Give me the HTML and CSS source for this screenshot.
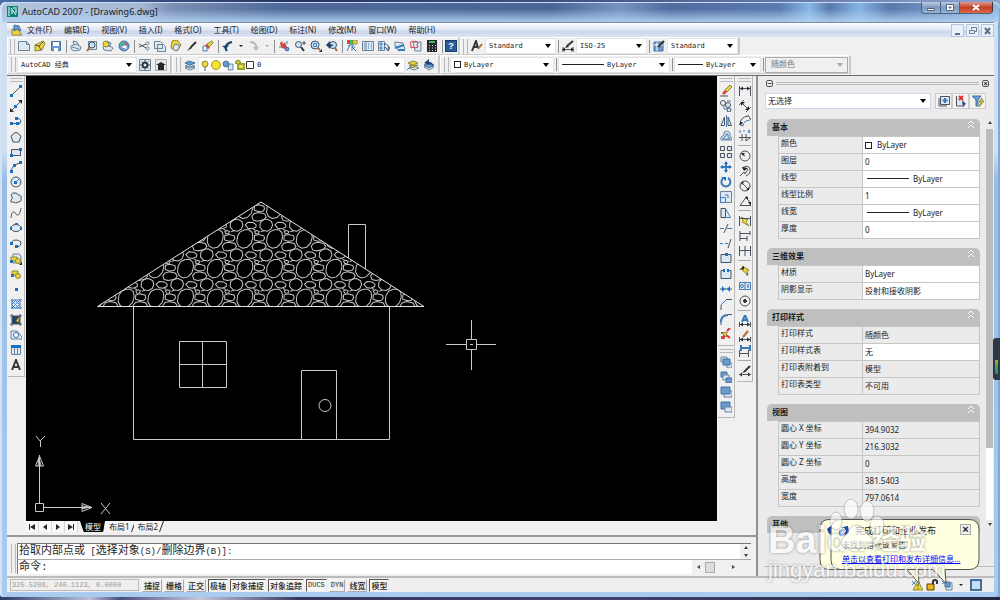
FILE: index.html
```html
<!DOCTYPE html>
<html lang="zh-CN">
<head>
<meta charset="utf-8">
<title>AutoCAD 2007 - [Drawing6.dwg]</title>
<link rel="stylesheet" href="styles.css">
</head>
<body>
<div class="window">
  <header class="titlebar">
    <svg class="app-logo"><path class="teal" d="M0 0h11v11H0z"/><path class="w" d="M2 1v9M4 2l5 7M9 1v6M5 8V4M7 1v2"/></svg>
    <h1>AutoCAD 2007 - [Drawing6.dwg]</h1>
    <div class="win-controls">
      <button aria-label="最小化"><svg><path class="pw" d="M2.500 6.500h7v2h-7z"/></svg></button>
      <button aria-label="最大化"><svg><path class="pw" d="M2.500 2.500h7v6h-7zM5 5h2v1H5z"/></svg></button>
      <button class="close" aria-label="关闭"><svg><path class="x2" d="M3 3l6 5M9 3l-6 5"/></svg></button>
    </div>
  </header>

  <nav class="menubar">
    <svg class="doc-logo"><path class="fy" d="M1 5l6 1 4 5H1z"/><path class="fb" d="M3 1l5 1 2 5-4-2-3 2z"/></svg>
    <button>文件(F)</button><button>编辑(E)</button><button>视图(V)</button><button>插入(I)</button><button>格式(O)</button><button>工具(T)</button><button>绘图(D)</button><button>标注(N)</button><button>修改(M)</button><button>窗口(W)</button><button>帮助(H)</button>
    <div class="mdi">
      <button aria-label="最小化图形"><svg><path class="g2" d="M3 9h5"/></svg></button>
      <button aria-label="还原图形"><svg><path class="g" d="M4.500 4.500v-2h5v4h-2M2.500 5.500h5v3h-5z"/></svg></button>
      <button aria-label="关闭图形"><svg><path class="g2" d="M3 3l5 6M8 3L3 9"/></svg></button>
    </div>
  </nav>

  <div class="toolrow">
    <div class="bar">
      <i class="grip"></i>
      <button class="tb" aria-label="新建"><svg><path class="lb" d="M.5 1.500h8l3 3v6H.5z"/><path d="M8.500 1.500v3h3"/></svg></button>
      <button class="tb" aria-label="打开"><svg><path class="fy" d="M1 5l8-4 2 2-3 7-7 1z"/><path class="k" d="M1 5l4 1 5-5M5 6l2 4"/></svg></button>
      <button class="tb" aria-label="保存"><svg><path class="fb" d="M1.500 1.500h9v9h-9z"/><path class="fw" d="M3 2h6v4H3zM4 8h4v3H4z"/></svg></button>
      <i class="sep"></i>
      <button class="tb" aria-label="打印"><svg><path class="lb" d="M1 6l5-2 5 3-1 3-6 1-3-2zM4 5L3 1l4 1 2 3M2 7l7 2"/></svg></button>
      <button class="tb" aria-label="打印预览"><svg><path class="lb" d="M2.500 1.500h8v8h-8z"/><circle class="gl" cx="6" cy="5" r="3"/><path class="o2" d="M4 7l-3 4"/></svg></button>
      <button class="tb" aria-label="发布"><svg><path class="lb" d="M1 7l5-2 5 3-2 3-7-1z"/><circle class="fy" cx="4" cy="4" r="3"/><path class="b" d="M5 2l4 1-2 4"/></svg></button>
      <button class="tb" aria-label="三维 DWF"><svg><circle class="fb" cx="6" cy="6" r="5"/><path class="fg" d="M2 4l4-3v5z"/><path class="fr" d="M7 2l3 3-3 1z"/><path class="fw" d="M3 7l5-2 1 4z"/></svg></button>
      <i class="sep"></i>
      <button class="tb" aria-label="剪切"><svg><path class="k" d="M1 4l7 4M1 7l7-3"/><circle cx="9.500" cy="3.500" r="1.500"/><circle cx="9.500" cy="8.500" r="1.500"/></svg></button>
      <button class="tb" aria-label="复制"><svg><path class="lb" d="M.5 1.500h6l2 2v5h-8zM3.500 4.500h6l2 2v5h-8z"/></svg></button>
      <button class="tb" aria-label="粘贴"><svg><path class="fy" d="M2 1l5-1 4 5-4 6-6-3z"/><path class="lb" d="M5 4l4 1v4l-4 2-2-3z"/></svg></button>
      <button class="tb" aria-label="画笔"><svg><path class="k2" d="M10 2L5 7"/><path class="fk" d="M5 6l1 2-5 3z"/></svg></button>
      <button class="tb" aria-label="特性匹配"><svg><path class="b" d="M1 6h4v5H1z"/><path class="fr" d="M3 5l2-1 3 4-2 1z"/><path class="fy" d="M5 4l5-3 1 2-4 4z"/></svg></button>
      <i class="sep"></i>
      <button class="tb" aria-label="放弃"><svg><path class="nv2" d="M5 11C2 8 4 3 10 2"/><path class="nf" d="M0 6l7-1-3 4z"/></svg></button>
      <button class="dd" aria-label="放弃列表"></button>
      <button class="tb" aria-label="重做"><svg><path class="gr2" d="M2 2c5 0 7 3 6 7"/><path class="gf" d="M5 7h6l-3 4z"/></svg></button>
      <button class="dd off" aria-label="重做列表"></button>
      <i class="sep"></i>
      <button class="tb" aria-label="实时平移"><svg><path class="fr" d="M2 3l2-2 1 3 2-2 1 3 1 2-3 2-3-2z"/><path class="fb" d="M8 7l3 1-1 3-3-1z"/><path class="b" d="M1 7h3M9 1v3"/></svg></button>
      <button class="tb" aria-label="实时缩放"><svg><circle class="gl" cx="4.500" cy="4.500" r="3"/><path class="k2" d="M7 7l3 4"/><path class="k" d="M8 3h4M10 1v4"/></svg></button>
      <button class="tb" aria-label="窗口缩放"><svg><circle class="gl" cx="5" cy="5" r="4"/><path class="b" d="M3.500 3.500h3v3h-3z"/><path class="o2" d="M8 8l2 2"/><path class="fk" d="M12 9v3H9z"/></svg></button>
      <button class="tb" aria-label="缩放上一个"><svg><circle class="gl" cx="7" cy="5" r="3.500"/><path class="nf" d="M0 5l4-4v3l4 1-4 2v2z"/><path class="o2" d="M9 8l2 3"/></svg></button>
      <i class="sep"></i>
      <button class="tb" aria-label="特性"><svg><path class="fr" d="M1 0h4v4H1z"/><path class="fg" d="M4 0h3v4H4z"/><path class="fy" d="M7 0h4v4H7z"/><path class="b" d="M2 6l4-2 3 4M4 5L1 11M6 5v6"/><path class="k" d="M6 7l4 4"/></svg></button>
      <button class="tb" aria-label="设计中心"><svg><path class="lb" d="M.5 1.500h11v9H.5zM4 1v10"/><path class="b" d="M6 4h1M9 4h1M6 6h1M9 6h1M6 8h1M9 8h1M2 4h1M2 6h1M2 8h1"/></svg></button>
      <button class="tb" aria-label="工具选项板"><svg><path class="lb" d="M.5 1.500h6v9h-6z"/><path class="b" d="M2 3h2v2H2zM2 7h2v2H2z"/><path class="nv" d="M6 4c4 0 5 2 4 5M7 7l3 4 2-4"/></svg></button>
      <button class="tb" aria-label="图纸集管理器"><svg><path class="lb" d="M1 2l8 1 2 6-6 2-4-5z"/><path class="b2" d="M1 8l9-3M4 10h7"/></svg></button>
      <button class="tb" aria-label="标记集管理器"><svg><path class="lb" d="M3 2h8v9H5z"/><path class="r" d="M2 1l2 1 2-1 2 2-1 2 1 2-3 1-2-1-2 1V5L0 3z"/></svg></button>
      <button class="tb" aria-label="计算器"><svg><path class="fk" d="M1 0h10v12H1z"/><path class="fg" d="M3 1h6v2H3z"/><path class="dots" d="M3 5.500h7M3 8h7M3 10.500h7"/></svg></button>
      <i class="sep"></i>
      <button class="tb help" aria-label="帮助">?</button>
    </div>
    <div class="bar">
      <i class="grip"></i>
      <button class="tb" aria-label="文字样式"><svg><path class="k2" d="M1 11L5 1l2 7M3 7h4"/><path class="o2" d="M11 4l-4 5"/></svg></button>
      <label class="combo w70"><select aria-label="文字样式"><option>Standard</option></select></label>
      <i class="sep"></i>
      <button class="tb" aria-label="标注样式"><svg><path class="k" d="M0 9.500h12M1 7v5M11 7v5"/><path class="k2" d="M11 1L5 6"/><path class="fk" d="M3 8l2-3 2 2zM0 9.500l3-2v4zM12 9.500l-3-2v4z"/></svg></button>
      <label class="combo w70"><select aria-label="标注样式"><option>ISO-25</option></select></label>
      <i class="sep"></i>
      <button class="tb" aria-label="表格样式"><svg><path class="fb" d="M1 2h9v9H1z"/><path class="w" d="M1 5h9M4 2v9"/><path class="k2" d="M11 1L5 7"/></svg></button>
      <label class="combo w70"><select aria-label="表格样式"><option>Standard</option></select></label>
    </div>
  </div>

  <div class="toolrow second">
    <div class="bar">
      <i class="grip"></i>
      <label class="combo w120"><select aria-label="工作空间"><option>AutoCAD 经典</option></select></label>
      <button class="tb" aria-label="工作空间设置"><svg><path class="lb" d="M.5.5h11v11H.5z"/><circle class="k2" cx="6" cy="6" r="2.500"/><path class="k" d="M6 1v2M6 9v2M1 6h2M9 6h2M2.500 2.500l1 1M8.500 8.500l1 1M9.500 2.500l-1 1M2.500 9.500l1-1"/></svg></button>
      <button class="tb" aria-label="我的工作空间"><svg><path class="dots2" d="M.5.5h11v11H.5z"/><path class="fk" d="M1 6l5-3 5 3H9v5H3V6z"/></svg></button>
    </div>
    <div class="bar">
      <i class="grip"></i>
      <button class="tb" aria-label="图层特性管理器"><svg><path class="lb" d="M1 9l5-2 5 2-5 2zM1 7l5-2 5 2-5 2z"/><path class="fb" d="M1 4l4-2 6 2-5 2z"/></svg></button>
      <label class="combo layer">
        <svg class="layer-pics"><circle class="fy" cx="5" cy="5" r="3"/><path class="k" d="M4 9h2M4 11h2"/><circle class="sun" cx="16" cy="6" r="4.500"/><path class="lb" d="M29 5h4v6h-5z"/><circle class="fb" cx="26" cy="5" r="3"/><path class="lock" d="M36 5V3q2-3 4 0v3M38 5h6v5h-6z"/><path class="k fw" d="M46.500 2.500h7v7h-7z"/></svg>
        <select aria-label="图层"><option>0</option></select></label>
      <button class="tb" aria-label="将对象的图层置为当前"><svg><path class="lb" d="M2 9l5-2 5 2-5 2z"/><path class="fy" d="M1 4l5-2 5 2-5 2zM2 6l5 1 4-1-5 3z"/><path class="b" d="M0 11l4-4"/></svg></button>
      <button class="tb" aria-label="上一个图层"><svg><path class="lb" d="M1 8l5-2 5 2-5 3z"/><path class="fb" d="M1 6l5-2 5 2-5 3z"/><path class="nf" d="M1 4l5-4v3q4 0 4 4Q8 4 6 6z"/></svg></button>
    </div>
    <div class="bar">
      <i class="grip"></i>
      <label class="combo w104"><i class="swatch"></i><select aria-label="颜色"><option>ByLayer</option></select></label>
      <i class="sep"></i>
      <label class="combo w111"><i class="line wide"></i><select aria-label="线型"><option>ByLayer</option></select></label>
      <i class="sep"></i>
      <label class="combo w86"><i class="line"></i><select aria-label="线宽"><option>ByLayer</option></select></label>
      <i class="sep"></i>
      <label class="combo w83 disabled"><select aria-label="打印样式" disabled><option>随颜色</option></select></label>
    </div>
  </div>

  <main class="main">
    <section class="left">
      <div class="workspace">
        <div class="vcol">
          <div class="vbar draw">
            <i class="hgrip"></i>
            <button class="tb" aria-label="直线"><svg><path class="k" d="M1 11L11 1"/><path class="d" d="M0 9h3v3H0zM9 0h3v3H9z"/></svg></button>
            <button class="tb" aria-label="构造线"><svg><path class="k" d="M1 11L11 1"/><path class="fk" d="M0 12V8l4 4zM12 0v4L8 0z"/><path class="d" d="M4 5h3v3H4z"/></svg></button>
            <button class="tb" aria-label="多段线"><svg><path class="k" d="M1 8.500h9q2-3-1-5H6"/><path class="d" d="M0 7h3v3H0zM6 7h3v3H6zM5 2h3v3H5z"/></svg></button>
            <button class="tb" aria-label="正多边形"><svg><path class="lb k" d="M6 1l5 4-2 6H3L1 5z"/></svg></button>
            <button class="tb" aria-label="矩形"><svg><path class="lb k" d="M1.500 3.500h9v6h-9z"/><path class="d" d="M0 8h3v3H0zM9 2h3v3H9z"/></svg></button>
            <button class="tb" aria-label="圆弧"><svg><path class="k" d="M1 11Q2 3 11 2"/><path class="d" d="M0 9h3v3H0zM3 3h3v3H3zM9 0h3v3H9z"/></svg></button>
            <button class="tb" aria-label="圆"><svg><circle class="lb k" cx="6" cy="6" r="5"/><path class="b" d="M6 6l3-3"/><path class="d" d="M4 5h3v3H4z"/></svg></button>
            <button class="tb" aria-label="修订云线"><svg><path class="lb k" d="M2 5Q0 1 4 1q3-1 4 2 4 0 3 3 1 4-3 4-3 2-4 0-4 1-3-2 2-1 1-3z"/></svg></button>
            <button class="tb" aria-label="样条曲线"><svg><path class="k" d="M1 11C2 3 4 4 6 7s4 0 5-6"/></svg></button>
            <button class="tb" aria-label="椭圆"><svg><ellipse class="lb k" cx="6" cy="6" rx="5" ry="3.500"/><path class="d" d="M0 5h2v3H0zM10 5h2v3h-2zM5 1h3v2H5z"/></svg></button>
            <button class="tb" aria-label="椭圆弧"><svg><path class="k" d="M1 6q2-4 6-3 5 1 4 4-1 3-5 3"/><path class="d" d="M0 5h3v3H0zM5 8h3v3H5z"/></svg></button>
            <button class="tb" aria-label="插入块"><svg><path class="lb" d="M3 1h6l2 2v7H3z"/><path class="fy" d="M1 4h6v4H1z"/><circle class="fy" cx="8" cy="8" r="2.500"/><path class="fk" d="M12 9v3H9z"/><path class="d" d="M0 7h3v3H0z"/></svg></button>
            <button class="tb" aria-label="创建块"><svg><path class="fy k" d="M2 3h6v4H2z"/><circle class="fy" cx="8" cy="8" r="2.500"/><path class="d" d="M1 6h3v3H1z"/></svg></button>
            <button class="tb" aria-label="点"><svg><path class="d" d="M5 5h3v3H5z"/></svg></button>
            <button class="tb" aria-label="图案填充"><svg><path class="b" d="M2 1v10M10 1v10M1 2h11M1 10h11M2 6l4-4M2 10l8-8M6 10l4-4M2 3l7 7M6 3l4 4M2 7l3 3"/></svg></button>
            <button class="tb" aria-label="渐变色"><svg><path class="nf" d="M2 2h8v8H2z"/><path class="fy" d="M6 7l3-4v5z"/><path class="k" d="M2 0v12M10 0v12M0 2h12M0 10h12"/></svg></button>
            <button class="tb" aria-label="面域"><svg><path class="lb" d="M1 2h6l5 6v2H1z"/><circle class="b fw" cx="6" cy="6" r="2.500"/></svg></button>
            <button class="tb" aria-label="表格"><svg><path class="lb" d="M1.500 1.500h9v9h-9z"/><path class="d" d="M1 1h10v3H1z"/><path d="M4.500 4v7M7.500 4v7"/></svg></button>
            <button class="tb" aria-label="多行文字"><svg><path class="k2" d="M2 11L6 1l4 10M3.500 8h5"/></svg></button>
          </div>
        </div>

        <div class="drawing">
          <svg class="canvas" viewBox="26 76 691 445" preserveAspectRatio="xMinYMin meet" role="img" aria-label="房屋图形">
            <defs>
              <clipPath id="roofclip"><path d="M97.500 306.500L261 202l163 104.500z"/></clipPath>
              <g id="stones">
                <path d="M14 4l12-1 12 7 3 11-5 12-11 6-13-2-9-10 1-14z"/>
                <path d="M48 20l9-8 15 1 9 7-1 7-12 5-12-2z"/>
                <path d="M33 41l13-6h14l9 8 2 14-5 18-12 12-14 3-11-6-6-12 2-18z"/>
                <path d="M76 40l7-3 7 3-3 6-8 1z"/>
                <path d="M76 52l13-3 15 4 2 8-5 7-13 1-13-4z"/>
                <path d="M68 84l7-9 13-3 18 4 5 9-7 9-20 4-12-3z"/>
                <path d="M94 41l11-4M72 33l7 3"/>
              </g>
              <g id="course"><use href="#stones"/><use href="#stones" x="89"/><use href="#stones" x="178"/><use href="#stones" x="267"/><use href="#stones" x="356"/><use href="#stones" x="445"/><use href="#stones" x="534"/><use href="#stones" x="623"/><use href="#stones" x="712"/><use href="#stones" x="801"/><use href="#stones" x="890"/><use href="#stones" x="979"/></g>
            </defs>
            <g clip-path="url(#roofclip)"><g class="stone" transform="translate(80.800 188.500) scale(.3335)"><use href="#course"/><use href="#course" y="89"/><use href="#course" y="178"/><use href="#course" y="267"/></g></g>
            <path class="roof" d="M97.500 306.500L261 202l163 104.500z"/>
            <path class="ln" d="M348.500 258v-33.500h17V269M133.500 306.500v133h256v-133M179.500 341.500h47v46h-47zM202.500 341.500v46M179.500 364.500h47M301.500 439.500v-69h35v69"/>
            <circle class="ln" cx="325" cy="405.500" r="6"/>
            <path class="ln" d="M446 344.500h20M476 344.500h20M471.500 320v20M471.500 350v20M466.500 339.500h10v10h-10zM470 344.500h3"/>
            <path class="ln" d="M35.500 503.500h8v8h-8zM39.500 503v-48M44 507.500h48M39.500 456l-4 10h8zM38 466l1-8 2 8M92 507.500l-10-4v8zM82 506l8 1-8 2M36 436l4 5 5-5M40.500 441v6M101 503l9 11M110 503l-9 11"/>
          </svg>
          <div class="tabs">
            <button class="nav" aria-label="第一个布局"><svg><path class="fk" d="M3 3h1v6H3zM9 3v6L4 6z"/></svg></button>
            <button class="nav" aria-label="上一个布局"><svg><path class="fk" d="M8 3v6L4 6z"/></svg></button>
            <button class="nav" aria-label="下一个布局"><svg><path class="fk" d="M4 3v6l4-3z"/></svg></button>
            <button class="nav" aria-label="最后一个布局"><svg><path class="fk" d="M3 3v6l5-3zM8 3h1v6H8z"/></svg></button>
            <button class="tab on">模型</button><button class="tab">布局1</button><button class="tab">布局2</button>
          </div>
        </div>

        <div class="vcol">
          <div class="vbar modify">
            <i class="hgrip"></i>
            <button class="tb" aria-label="删除"><svg><path class="fy" d="M5 5l5-5 2 2-5 5z"/><path class="fr" d="M2 8l3-3 2 2-3 3z"/><path class="k" d="M0 11h8"/></svg></button>
            <button class="tb" aria-label="复制对象"><svg><circle class="k" cx="3" cy="3" r="2.500"/><circle class="k lb" cx="8" cy="5" r="2.500"/><circle class="k lb" cx="9" cy="10" r="2"/><path class="b" d="M4 6v3h3M7 1h4"/></svg></button>
            <button class="tb" aria-label="镜像"><svg><path class="k" d="M4.500 2v8.500H1z"/><path class="lb k" d="M8 2v8.500h3.500z"/><path class="b" d="M6.500 0v12"/></svg></button>
            <button class="tb" aria-label="偏移"><svg><path class="lb" d="M1 10V7l3-2V2l4-1 2 2v3l2 2v2z"/><path class="b" d="M3 9V8l3-2V4h2v3l2 1v1z"/></svg></button>
            <button class="tb" aria-label="阵列"><svg><path class="k lb" d="M.5.5h4v4h-4zM7.500.5h4v4h-4zM.5 7.500h4v4h-4zM7.500 7.500h4v4h-4z"/></svg></button>
            <button class="tb" aria-label="移动"><svg><path class="b2" d="M1 6h10M6 1v10"/><path class="d" d="M6 0l2 3H4zM6 12l2-3H4zM0 6l3-2v4zM12 6L9 4v4z"/></svg></button>
            <button class="tb" aria-label="旋转"><svg><path class="b2" d="M3 2.500A4.500 4.500 0 1 0 8 2"/><path class="d" d="M1 1h5v4z"/></svg></button>
            <button class="tb" aria-label="缩放"><svg><path class="lb" d="M.5.5h11v11H.5z"/><path class="b" d="M.5 6.500h5v5h-5zM5 4h3v3"/></svg></button>
            <button class="tb" aria-label="拉伸"><svg><path class="lb k" d="M1 1.500h4.500v9H1z"/><path class="b" d="M5.500 1.500l5 9h-5"/></svg></button>
            <button class="tb" aria-label="修剪"><svg><path class="b" d="M0 6.500h4M7 6.500h5"/><path class="k" d="M4 11l4-9"/></svg></button>
            <button class="tb" aria-label="延伸"><svg><path class="b" d="M0 6.500h3M5 6.500h3"/><path class="k" d="M8 11l3-9"/></svg></button>
            <button class="tb" aria-label="打断于点"><svg><path class="lb k" d="M1 2.500h10v8H1z"/><path class="d" d="M5 1h3v3H5z"/></svg></button>
            <button class="tb" aria-label="打断"><svg><path class="lb k" d="M4 2.500H1v8h10v-8H8"/><path class="d" d="M3 1h2v3H3zM7 1h2v3H7z"/></svg></button>
            <button class="tb" aria-label="合并"><svg><path class="k" d="M0 6h12"/><path class="d" d="M5 6L2 3v6zM7 6l3-3v6z"/></svg></button>
            <button class="tb" aria-label="倒角"><svg><path class="k" d="M1 12V7M6 1.500h6"/><path class="b" d="M1 7l5-5"/></svg></button>
            <button class="tb" aria-label="圆角"><svg><path class="k" d="M1 12V9M8 1.500h4"/><path class="b2" d="M1 9q0-7 7-7"/></svg></button>
            <button class="tb" aria-label="分解"><svg><path class="r2" d="M1 5h3v5M7 3l3-3M6 7l4 3"/><path class="fy" d="M2 5l5-1-1 5z"/><path class="fr" d="M1 8h4v3H1z"/></svg></button>
          </div>
          <div class="vbar">
            <i class="hgrip"></i>
            <button class="tb" aria-label="前置"><svg><path class="lb" d="M1 1h6v5H1zM7 7h5v5H7z"/><path class="fb" d="M3 3h7v6H3z"/></svg></button>
            <button class="tb" aria-label="后置"><svg><path class="fb" d="M1 1h6v5H1z"/><path class="lb" d="M3 4h6v5H3z"/><path class="fb" d="M6 7h6v5H6z"/></svg></button>
            <button class="tb" aria-label="置于对象之上"><svg><path class="lb" d="M4 5h8v6H4z"/><path class="fb" d="M1 1h9v7H1z"/></svg></button>
            <button class="tb" aria-label="置于对象之下"><svg><path class="fb" d="M1 1h9v7H1z"/><path class="lb" d="M5 6h7v5H5z"/></svg></button>
          </div>
        </div>

        <div class="vcol dim">
          <div class="vbar">
            <i class="hgrip"></i>
            <button class="tb" aria-label="线性标注"><svg><path class="k" d="M.5 1v10M11.500 1v10M1 3.500h10"/><path class="fk" d="M1 3.500l3-2v4zM11 3.500l-3-2v4z"/></svg></button>
            <button class="tb" aria-label="对齐标注"><svg><path class="k" d="M0 5l5-5M7 12l5-5M3 3l6 6"/><path class="fk" d="M2 2h4L2 6zM10 10V6l-4 4z"/></svg></button>
            <button class="tb" aria-label="弧长标注"><svg><path class="b" d="M4 11q0-5 7-6"/><path class="k" d="M1 10q0-8 8-9M9 0l3 5M0 9l4 2"/><path class="fk" d="M1 10V6l3 2z"/></svg></button>
            <button class="tb" aria-label="坐标标注"><svg><path class="k" d="M3 4v7M0 7.500h12M7 4v7l4-3"/><path class="b" d="M1 0v3M4 1h2M9 0l2 3M11 0L9 3"/></svg></button>
            <i class="hsep"></i>
            <button class="tb" aria-label="半径标注"><svg><circle class="k" cx="6" cy="6" r="5"/><path class="k" d="M6 6L3 4"/><path class="fk" d="M2 3h4L4 6z"/></svg></button>
            <button class="tb" aria-label="折弯标注"><svg><path class="k" d="M3 3q7-4 8 1t-4 7M1 11l4-4 1 2 3-5"/><path class="fk" d="M3 2l6 1-4 3z"/></svg></button>
            <button class="tb" aria-label="直径标注"><svg><circle class="k" cx="6" cy="6" r="5"/><path class="k" d="M3 3l6 6"/><path class="fk" d="M2 2h3L3 5zM10 10V7l-3 3z"/></svg></button>
            <button class="tb" aria-label="角度标注"><svg><path class="k" d="M8 1L1 10.500h11M7 3q3 1 4 6"/><path class="fk" d="M9 7h3v4zM6 2h3v3z"/></svg></button>
            <i class="hsep"></i>
            <button class="tb" aria-label="快速标注"><svg><path class="fy" d="M2 2l7 3-2 2 3 4-7-4 1-2z"/><path class="k" d="M.5 1v10M11.500 1v10M1 3.500h10"/></svg></button>
            <button class="tb" aria-label="基线标注"><svg><path class="k" d="M1 1v10M1 3.500h10M11 1v4M1 8.500h7M8 6v5"/></svg></button>
            <button class="tb" aria-label="连续标注"><svg><path class="k" d="M.5 1v10M6 1v10M11.500 1v10M1 5.500h11"/></svg></button>
            <i class="hsep"></i>
            <button class="tb" aria-label="快速引线"><svg><path class="fy" d="M3 1l7 4-2 1 1 4-6-5 2-1z"/><path class="fk" d="M0 5l5-4v3z"/><path class="k" d="M8 8v3"/></svg></button>
            <button class="tb" aria-label="公差"><svg><path class="lb b" d="M.5 2.500h11v7H.5zM6 2.500v7"/><circle class="b" cx="3" cy="6" r="1.500"/><path class="k" d="M9 4v4"/></svg></button>
            <button class="tb" aria-label="圆心标记"><svg><circle class="k" cx="6" cy="6" r="5"/><path class="k2" d="M6 4v4M4 6h4"/></svg></button>
            <i class="hsep"></i>
            <button class="tb" aria-label="编辑标注"><svg><path class="b2" d="M3 7l3-7 3 7M4 5h4"/><path class="k" d="M.5 7v5M11.500 7v5M1 9.500h10"/><path class="fk" d="M1 9.500l3-2v4zM11 9.500l-3-2v4z"/></svg></button>
            <button class="tb" aria-label="编辑标注文字"><svg><path class="o2" d="M9 1L4 7"/><path class="k" d="M.5 7v5M11.500 7v5M1 9.500h10"/><path class="fk" d="M1 9.500l3-2v4zM11 9.500l-3-2v4z"/></svg></button>
            <button class="tb" aria-label="标注更新"><svg><path class="k" d="M.5 5v7M9.500 5v7M1 8.500h8"/><path class="b2" d="M2 0v6M11 0v6M3 3h8"/></svg></button>
            <i class="hsep"></i>
            <button class="tb" aria-label="标注样式管理"><svg><path class="k2" d="M11 1L6 6"/><path class="fk" d="M3 8l3-3 1 2zM0 9.500l3-2v4zM12 9.500l-3-2v4z"/><path class="k" d="M0 9.500h12"/></svg></button>
          </div>
        </div>
      </div>

      <div class="command">
        <i class="grip"></i>
        <div class="cmd-box">
          <div class="cmd-history"><p>拾取内部点或<span class="ascii"> [</span>选择对象<span class="ascii">(S)/</span>删除边界<span class="ascii">(B)]:</span></p>
            <span class="spin"><i class="up"></i><i class="down"></i></span></div>
          <div class="cmd-line"><label for="cmd">命令:</label><input id="cmd" type="text"><span class="hscroll"><i class="lt"></i><b></b><i class="rt"></i></span></div>
        </div>
      </div>
    </section>

    <aside class="panel">
      <div class="panel-top"><button aria-label="最小化选项板">−</button><i></i><button aria-label="关闭选项板">×</button></div>
      <div class="pick">
        <label class="combo ui"><select aria-label="对象选择"><option>无选择</option></select></label>
        <button class="pb" aria-label="切换 PICKADD"><svg><path class="k" d="M1 3v8h8"/><path class="lb k" d="M2.500 1.500h9v8h-9z"/><path class="b2" d="M7 3v5M4.500 5.500h5"/></svg></button>
        <button class="pb" aria-label="选择对象"><svg><path class="lb k" d="M1.500 1v10H9V8"/><path class="r2" d="M4 1l4 4M8 1L4 5"/><path class="nf" d="M7 5l4 4-2 1-1 2z"/></svg></button>
        <button class="pb" aria-label="快速选择"><svg><path class="fb" d="M0 1h9L6 5v6H4V5z"/><path class="fy" d="M10 3l-3 4h2l-2 5 5-6h-2z"/></svg></button>
      </div>
      <div class="props">
        <div class="groups">
          <section><h2>基本<svg><path class="w" d="M3 5l3-3 3 3M3 9l3-3 3 3"/></svg></h2>
            <table><tr><th scope="row">颜色</th><td><i class="swatch"></i>ByLayer</td></tr><tr><th scope="row">图层</th><td>0</td></tr><tr><th scope="row">线型</th><td><i class="line"></i>ByLayer</td></tr><tr><th scope="row">线型比例</th><td>1</td></tr><tr><th scope="row">线宽</th><td><i class="line"></i>ByLayer</td></tr><tr><th scope="row">厚度</th><td>0</td></tr></table></section>
          <section><h2>三维效果<svg><path class="w" d="M3 5l3-3 3 3M3 9l3-3 3 3"/></svg></h2>
            <table><tr><th scope="row">材质</th><td>ByLayer</td></tr><tr><th scope="row">阴影显示</th><td>投射和接收阴影</td></tr></table></section>
          <section><h2>打印样式<svg><path class="w" d="M3 5l3-3 3 3M3 9l3-3 3 3"/></svg></h2>
            <table><tr class="ro"><th scope="row">打印样式</th><td>随颜色</td></tr><tr><th scope="row">打印样式表</th><td>无</td></tr><tr class="ro"><th scope="row">打印表附着到</th><td>模型</td></tr><tr class="ro"><th scope="row">打印表类型</th><td>不可用</td></tr></table></section>
          <section><h2>视图<svg><path class="w" d="M3 5l3-3 3 3M3 9l3-3 3 3"/></svg></h2>
            <table><tr class="ro"><th scope="row">圆心 X 坐标</th><td>394.9032</td></tr><tr class="ro"><th scope="row">圆心 Y 坐标</th><td>216.3032</td></tr><tr class="ro"><th scope="row">圆心 Z 坐标</th><td>0</td></tr><tr class="ro"><th scope="row">高度</th><td>381.5403</td></tr><tr class="ro"><th scope="row">宽度</th><td>797.0614</td></tr></table></section>
          <section><h2>其他</h2></section>
        </div>
        <div class="vscroll"><i class="up"></i><b></b><span></span><i class="down"></i></div>
      </div>
    </aside>
  </main>

  <footer class="status">
    <output class="coords">325.5208, 240.1123, 0.0000</output>
    <button>捕捉</button><button>栅格</button><button>正交</button><button class="in">极轴</button><button class="in">对象捕捉</button><button class="in">对象追踪</button><button class="in mono">DUCS</button><button class="mono">DYN</button><button>线宽</button><button class="in">模型</button>
    <div class="tray">
      <svg><path class="b" d="M1 2l4 4M1 6l4-4"/><path class="fy" d="M7 2l5 9H2z"/><path class="k" d="M7 5v3M7 9v1"/></svg>
      <svg><path class="gold" d="M1 5h7v6H1z"/><path class="k2" d="M7 5V2q2-2 4 0v3"/></svg>
      <svg><path class="b" d="M1 2l4 3M1 5l4-3"/><path class="lb" d="M5 4h6v7H5z"/><path class="fb" d="M4 3h5v5H4z"/></svg>
      <button class="dd" aria-label="状态栏菜单"></button>
      <button class="clean" aria-label="全屏显示"></button>
    </div>
  </footer>

  <div class="balloon-wrap">
    <svg class="balloons" viewBox="0 0 164 66"><path class="bal" d="M10 .5h130q10 0 10 10v30q0 10-10 10h-41l1 14-12-14H10q-9 0-9-10v-30q0-10 9-10z"/><path class="nf2" d="M8 10q5-6 10 0-3 5-8 5z"/><path class="bal" d="M22 .5h128q10 0 10 10v30q0 10-10 10h-24l1 14-13-14H22q-10 0-10-10v-30q0-10 10-10z"/><path class="nf2" d="M20 13q3-6 9-6l1 6q-4 5-9 4z"/><path class="w" d="M24 9l3 3-5 2"/></svg>
    <div class="balloon"><h3>完成打印和企业发布</h3><button aria-label="关闭通知">×</button><p>未找到错误或警告</p><a href="#">单击以查看打印和发布详细信息...</a></div>
  </div>
  <div class="watermark">
    <svg viewBox="0 0 60 50"><ellipse cx="23" cy="10" rx="7" ry="10"/><ellipse cx="39" cy="12" rx="7" ry="10"/><ellipse cx="8" cy="22" rx="6" ry="9"/><ellipse cx="49" cy="26" rx="7" ry="9"/><path d="M28 26q7 0 11 9 8 5 6 10-2 5-16 4-15 1-16-4-1-5 6-10 4-9 9-9z"/></svg>
    <span class="wm-name">Bai<span class="wm-du">du</span><span class="wm-cn">经验</span></span>
    <span class="wm-url">jingyan.baidu.com</span>
  </div>
  <div class="gadget"><i></i></div>
</div>
</body>
</html>
```
FILE: styles.css
```css
* { box-sizing: border-box; }
html, body { height: 100%; margin: 0; }
body {
  padding: 2px 0 3px;
  background: linear-gradient(90deg, #2d3c66, #b9bfd8 9%, #4b4f80 12%, #c3c6dc 20%, #37345c 30%, #44406e 60%, #26263f) bottom / 100% 3px no-repeat, linear-gradient(90deg, #4c6ea8, #27325e 30%, #46558c 60%, #8ba3d0) #c3d7ec;
  font: 8px/12px "Noto Sans", "Noto Sans CJK SC", sans-serif;
  color: #1c1c1c;
  overflow: hidden;
}
button, select, input { font: inherit; color: inherit; margin: 0; padding: 0; border: 0; background: none; border-radius: 0; }
h1, h2, h3, p { margin: 0; font-weight: 400; }
i, b { display: block; flex: none; }
.window {
  position: relative;
  display: flex; flex-direction: column;
  height: 100%;
  padding: 0 6px 5px 7px;
  border-radius: 6px 6px 4px 4px;
  background: linear-gradient(#cfdff0, #cfe0f3 25%, #98bde6 30%, #a9cbee);
  box-shadow: inset 0 1px #dce9f8, inset 2px 0 #d4e3f3, inset -2px 0 #7fa9d8;
}

/* icon drawing */
svg { display: block; flex: none; width: 12px; height: 12px; fill: none; stroke: #6d8398; stroke-width: 1; overflow: hidden; }
.k { stroke: #4a525b; }
.k2 { stroke: #33363b; stroke-width: 2; }
.b { stroke: #3f7fbf; }
.b2 { stroke: #3d79b8; stroke-width: 2; }
.r { stroke: #e0353c; }
.r2 { stroke: #d33; stroke-width: 2; }
.g { stroke: #6b7d92; }
.g2 { stroke: #5d6f84; stroke-width: 2; }
.w { stroke: #fff; }
.nv { stroke: #20406f; }
.nv2 { stroke: #20406f; stroke-width: 2; }
.gr2 { stroke: #b5b8bb; stroke-width: 2; }
.o2 { stroke: #b5682c; stroke-width: 2; }
.x2 { stroke: #fff; stroke-width: 2; }
.d { fill: #1672c4; stroke: none; }
.lb { fill: #dce8f4; }
.fb { fill: #6a9ace; stroke: #42729f; }
.fy { fill: #ecd63c; stroke: #948634; }
.fr { fill: #d8453e; stroke: none; }
.fg { fill: #3fbf5b; stroke: none; }
.fw { fill: #fff; stroke: none; }
.k.fw { stroke: #333; }
.b.fw { stroke: #2a6fb4; }
.fk { fill: #24272b; stroke: none; }
.nf, .nf2 { fill: #20406f; stroke: none; }
.nf2 { fill: #1746ae; }
.gf { fill: #b5b8bb; stroke: none; }
.pw { fill: #fff; stroke: #53647a; }
.teal { fill: #0c8378; stroke: none; }
.dots { stroke: #d9d9d9; stroke-dasharray: 1 2; }
.dots2 { fill: #e6e6e6; stroke: #777; stroke-dasharray: 1 1; }
.sun { fill: #f5e32d; stroke: #a2902b; }
.lock { stroke: #9aa62a; stroke-width: 2; fill: #e6e05c; }
.gold { fill: #e8b923; stroke: #5a4300; }
.gl { fill: #cfe2f3; stroke: #39516d; }

/* title and menu */
.titlebar {
  display: flex; align-items: center; flex: none;
  height: 20px; margin: 0 -5px; padding-left: 5px;
  border-radius: 6px 6px 0 0;
  background: linear-gradient(rgba(255,255,255,0) 35%, rgba(176,209,242,.85) 95%), linear-gradient(90deg, #b3c5dc, #a5b9d4 14%, #7a8fb4 17%, #4f6a9a 28%, #4b6596 55%, #7693c0 62%, #4f6c9f 67%, #5c7bae 78%, #87b7e6 81%, #5a79ab 83%, #83b4e4 86%, #5a79ab 89%, #90b9e4);
  box-shadow: inset 0 1px #c8dcf2;
}
.app-logo { margin-right: 3px; }
.titlebar h1 { flex: 1; font-size: 9px; line-height: 16px; color: #141d2b; }
.win-controls { display: flex; align-self: flex-start; margin-right: 6px; }
.win-controls button { display: grid; place-items: center; width: 19px; height: 12px; border: 1px solid #4f637e; border-top: 0; border-right: 0; background: linear-gradient(#b9cbe0, #7e9abf 50%, #98b6da); }
.win-controls button:first-child { border-radius: 0 0 0 4px; }
.win-controls .close { width: 34px; border-radius: 0 0 4px 0; border-right: 1px solid #4f2f35; background: linear-gradient(#dd9a8d, #c33e27 50%, #da6a4b); }
.menubar { display: flex; align-items: center; gap: 12px; flex: none; height: 15px; padding-left: 4px; border-top: 1px solid #7c8ea6; background: linear-gradient(#fcfdff, #dfe5f3 50%, #ccd5ea 60%, #dde4f4); }
.doc-logo { margin-right: -8px; }
.mdi { display: flex; gap: 2px; margin-left: auto; }
.mdi button { width: 13px; height: 13px; border: 1px solid #b5c6dc; background: #eaf1fa; }
.mdi svg { width: 11px; height: 11px; }

/* toolbars */
.toolrow { display: flex; flex: none; height: 18px; background: #f0f0f0; }
.toolrow.second { height: 21px; padding-bottom: 1px; border-bottom: 1px solid #696969; }
.bar { display: flex; align-items: center; border: solid #fff; border-width: 1px 0 0 1px; border-right: 2px solid #c9c9c9; border-bottom: 1px solid #ccc; }
.second .bar { padding: 0 1px; }
.grip { width: 5px; height: 15px; margin: 0 1px 0 2px; border: solid #b9b9b9; border-width: 0 1px; }
.tb { display: grid; place-items: center; flex: none; width: 16px; height: 15px; }
.sep { width: 1px; height: 13px; margin: 0 1px 0 2px; background: #8e8e8e; }
.dd { width: 10px; height: 15px; display: grid; place-items: center; }
.dd::after { content: ""; border: 2px solid transparent; border-top-color: #222; border-bottom: 0; }
.dd.off::after { border-top-color: #aaa; }
.help { width: 12px; height: 12px; margin: 0 1px; border: 1px solid #173a66; background: #2b5d98; color: #fff; font: bold 9px/10px "Liberation Sans", sans-serif; }
.combo { position: relative; display: flex; align-items: center; height: 16px; padding-left: 3px; border: 1px solid #e3e3e3; background: #fff; font-family: "DejaVu Sans Mono", "Noto Sans CJK SC", monospace; font-size: 7px; }
.combo select { flex: 1; min-width: 0; height: 14px; appearance: none; outline: 0; }
.combo::after { content: ""; width: 0; margin-right: 4px; border: 3px solid transparent; border-top: 4px solid #000; border-bottom: 0; pointer-events: none; }
.w70 { width: 71px; }
.w83 { width: 83px; }
.w86 { width: 87px; }
.w104 { width: 104px; }
.w111 { width: 112px; }
.w120 { width: 120px; }
.layer { width: 207px; padding-left: 1px; }
.layer-pics { width: 55px; margin-right: 2px; }
.swatch { display: inline-block; width: 7px; height: 7px; margin-right: 3px; border: 1px solid #222; }
.line { display: inline-block; width: 25px; height: 1px; margin-right: 3px; background: #222; }
.line.wide { width: 42px; }
.disabled { border-color: #aaa; background: #f0f0f0; color: #777; font-size: 8px; }
.disabled::after { border-top-color: #aaa; }
.disabled select { opacity: 1; padding-left: 2px; }
.ui { flex: 1; padding-left: 2px; font-family: inherit; font-size: 8px; border-color: #cdd9e8; }

/* work area */
.main { display: flex; flex: 1; min-height: 0; background: #f0f0f0; }
.left { display: flex; flex: 1; flex-direction: column; min-width: 0; border-right: 2px solid #909090; }
.workspace { display: flex; flex: 1; min-height: 0; padding-right: 2px; border-bottom: 2px solid #999; }
.vcol { flex: none; width: 19px; }
.dim { width: 18px; }
.vbar { display: flex; flex-direction: column; align-items: center; margin: 0 1px 1px; padding-bottom: 3px; border-right: 1px solid #b8b8b8; border-bottom: 1px solid #b8b8b8; }
.draw, .modify { justify-content: space-between; }
.draw { min-height: 301px; }
.modify { min-height: 270px; }
.hgrip { width: 13px; height: 4px; margin: 2px 0 1px; border: solid #b9b9b9; border-width: 1px 0; }
.hsep { width: 13px; height: 1px; margin: 2px 0; background: #aaa; }
.drawing { display: flex; flex: 1; flex-direction: column; min-width: 0; padding-bottom: 2px; }
.canvas { flex: 1; width: 100%; min-height: 0; background: #000; }
.ln { stroke: #c9c9c9; }
.roof { stroke: #e2e2e2; }
.stone { stroke: #c8c8c8; stroke-width: 3; }
.tabs { display: flex; flex: none; height: 12px; line-height: 11px; }
.nav { width: 13px; height: 11px; border-right: 1px solid #d8d8d8; background: #f8f8f8; }
.tab { position: relative; height: 11px; padding: 0 4px; background: #f5f5f5; }
.tab::after { content: ""; position: absolute; inset: 0 0 0 auto; width: 1px; background: #222; transform: skewX(-20deg); }
.tab.on { margin-left: 2px; padding-left: 5px; background: #000; color: #fff; clip-path: polygon(0 0, 100% 0, 92% 100%, 15% 100%); }

.command { display: flex; flex: none; padding: 6px 5px 2px 1px; }
.command .grip { height: auto; margin: 1px 1px 1px 3px; }
.cmd-box { flex: 1; border-left: 1px solid #777; border-top: 1px solid #777; font-family: "Liberation Mono", "Noto Sans CJK SC", monospace; font-size: 11px; line-height: 15px; background: #fff; }
.ascii { font-size: 9px; white-space: pre; }
.cmd-history { display: flex; justify-content: space-between; height: 16px; padding-left: 1px; border-bottom: 1px solid #aaa; line-height: 14px; }
.cmd-line { display: flex; height: 14px; padding-left: 1px; }
.cmd-line input { flex: 1; min-width: 0; outline: 0; }
.spin { display: flex; flex-direction: column; justify-content: space-around; align-items: center; width: 11px; background: #f0f0f0; }
.up, .down { border: 2px solid transparent; }
.up { border-bottom: 3px solid #444; border-top: 0; }
.down { border-top: 3px solid #444; border-bottom: 0; }
.hscroll { display: flex; align-items: center; gap: 5px; width: 59px; padding: 0 5px; background: #f0f0f0; }
.hscroll b { width: 10px; height: 11px; margin-right: 12px; border: 1px solid #aaa; background: #ddd; }
.lt, .rt { border: 2px solid transparent; }
.lt { border-right: 3px solid #444; border-left: 0; }
.rt { border-left: 3px solid #444; border-right: 0; }

/* properties */
.panel { display: flex; flex-direction: column; flex: 0 0 236px; min-height: 0; padding: 3px 0 9px 6px; background: #ebebeb; }
.panel-top { display: flex; align-items: center; gap: 3px; height: 9px; padding: 0 5px 0 2px; }
.panel-top i { flex: 1; height: 3px; border: solid #bbb; border-width: 1px 0; }
.panel-top button { width: 7px; height: 7px; border: 1px solid #555; border-radius: 2px; font: bold 7px/5px "Liberation Sans", sans-serif; }
.pick { display: flex; height: 16px; margin-top: 5px; padding: 0 8px 0 1px; }
.pb { display: grid; place-items: center; width: 17px; height: 16px; border: 1px solid #ccc; background: #f3f3f3; }
.pick .combo { margin-right: 4px; }
.props { display: flex; flex: 1; min-height: 0; margin-top: 10px; border-bottom: 1px solid #bbb; }
.groups { flex: 1; min-width: 0; padding: 0 5px 0 3px; overflow: hidden; }
.groups section { margin-bottom: 9px; }
.groups h2 { display: flex; justify-content: space-between; height: 17px; padding: 0 3px 0 5px; border-radius: 5px 5px 0 0; background: #bfbfbf; font-size: 8px; font-weight: 700; line-height: 16px; }
table { width: calc(100% - 11px); margin-left: 11px; border-collapse: collapse; table-layout: fixed; }
tr { height: 17px; }
th, td { padding: 0 2px; border: 1px solid #c6c6c6; font-weight: 400; text-align: left; line-height: 12px; }
th { width: 84px; vertical-align: top; }
td { background: #fff; vertical-align: middle; white-space: nowrap; }
.ro td { background: #ebebeb; }
td .line { width: 42px; margin: 0 4px 3px 2px; }
td .swatch { margin: 0 5px 0 0; vertical-align: -1px; }
.vscroll { display: flex; flex-direction: column; align-items: center; width: 9px; padding-top: 2px; }
.vscroll b { flex: 320; width: 7px; margin-top: 5px; background: #bcbcbc; }
.vscroll span { flex: 72; width: 7px; background: #fff; }
.vscroll .down { margin: 3px 0 40px; }

/* status bar */
.status { display: flex; align-items: center; gap: 2px; flex: none; height: 16px; padding: 0 3px; border-top: 2px solid #bbb; background: #f0eeee; }
.coords { width: 129px; height: 12px; margin-right: 1px; padding-left: 1px; border: 1px solid #bbb; color: #999; font: 7px/10px "Liberation Mono", monospace; }
.status > button { height: 13px; padding: 0 1px; border: 1px solid #f7f7f7; border-right-color: #aaa; border-bottom-color: #aaa; line-height: 11px; font-weight: 500; }
.status > .in { border: 1px solid #555; border-right-color: #eee; border-bottom-color: #eee; background: #f7f7f7; }
.status > .mono { font-family: "Liberation Mono", monospace; font-size: 7px; }
.tray { display: flex; align-items: center; gap: 3px; margin-left: auto; margin-right: 9px; }
.clean { width: 12px; height: 12px; margin-left: 1px; border: 2px solid #3f6e9f; background: #c5dcf1; }

/* overlays */
.balloon-wrap { position: absolute; right: 17px; bottom: 12px; width: 164px; height: 66px; }
.balloons { position: absolute; inset: 0; width: 164px; height: 66px; }
.bal { fill: #ffffe1; stroke: #555; }
.balloon { position: relative; display: grid; grid-template-columns: 1fr auto; padding: 5px 12px 0 23px; }
.balloon h3 { padding-left: 13px; font-size: 9px; line-height: 14px; }
.balloon button { width: 11px; height: 11px; border: 1px solid #aaa; background: #eee; font: bold 11px/9px "Liberation Sans", sans-serif; }
.balloon p, .balloon a { grid-column: 1 / -1; line-height: 14px; }
.balloon p { color: #333; }
.balloon a { margin-right: -12px; line-height: 13px; color: #00f; white-space: nowrap; }
.watermark { position: absolute; right: 52px; bottom: 16px; width: 180px; opacity: .65; color: #fff; text-shadow: 0 0 3px #666; font-family: "Liberation Sans", "Noto Sans CJK SC", sans-serif; pointer-events: none; }
.watermark svg { position: absolute; left: 60px; top: -22px; width: 60px; height: 50px; fill: #fff; stroke: #aaa; }
.wm-name { display: flex; align-items: center; height: 38px; font-size: 38px; font-weight: 700; line-height: 38px; }
.wm-du { font-size: 32px; }
.wm-cn { margin-left: 6px; font-size: 27px; }
.wm-url { display: block; font-size: 22px; line-height: 22px; }
.gadget { position: absolute; right: 0; top: 336px; width: 7px; height: 42px; padding: 22px 2px 5px; border-radius: 3px 0 0 3px; background: #303747; }
.gadget i { height: 14px; background: linear-gradient(#b4a832, #36a65b 50%, #248d80); }
```
